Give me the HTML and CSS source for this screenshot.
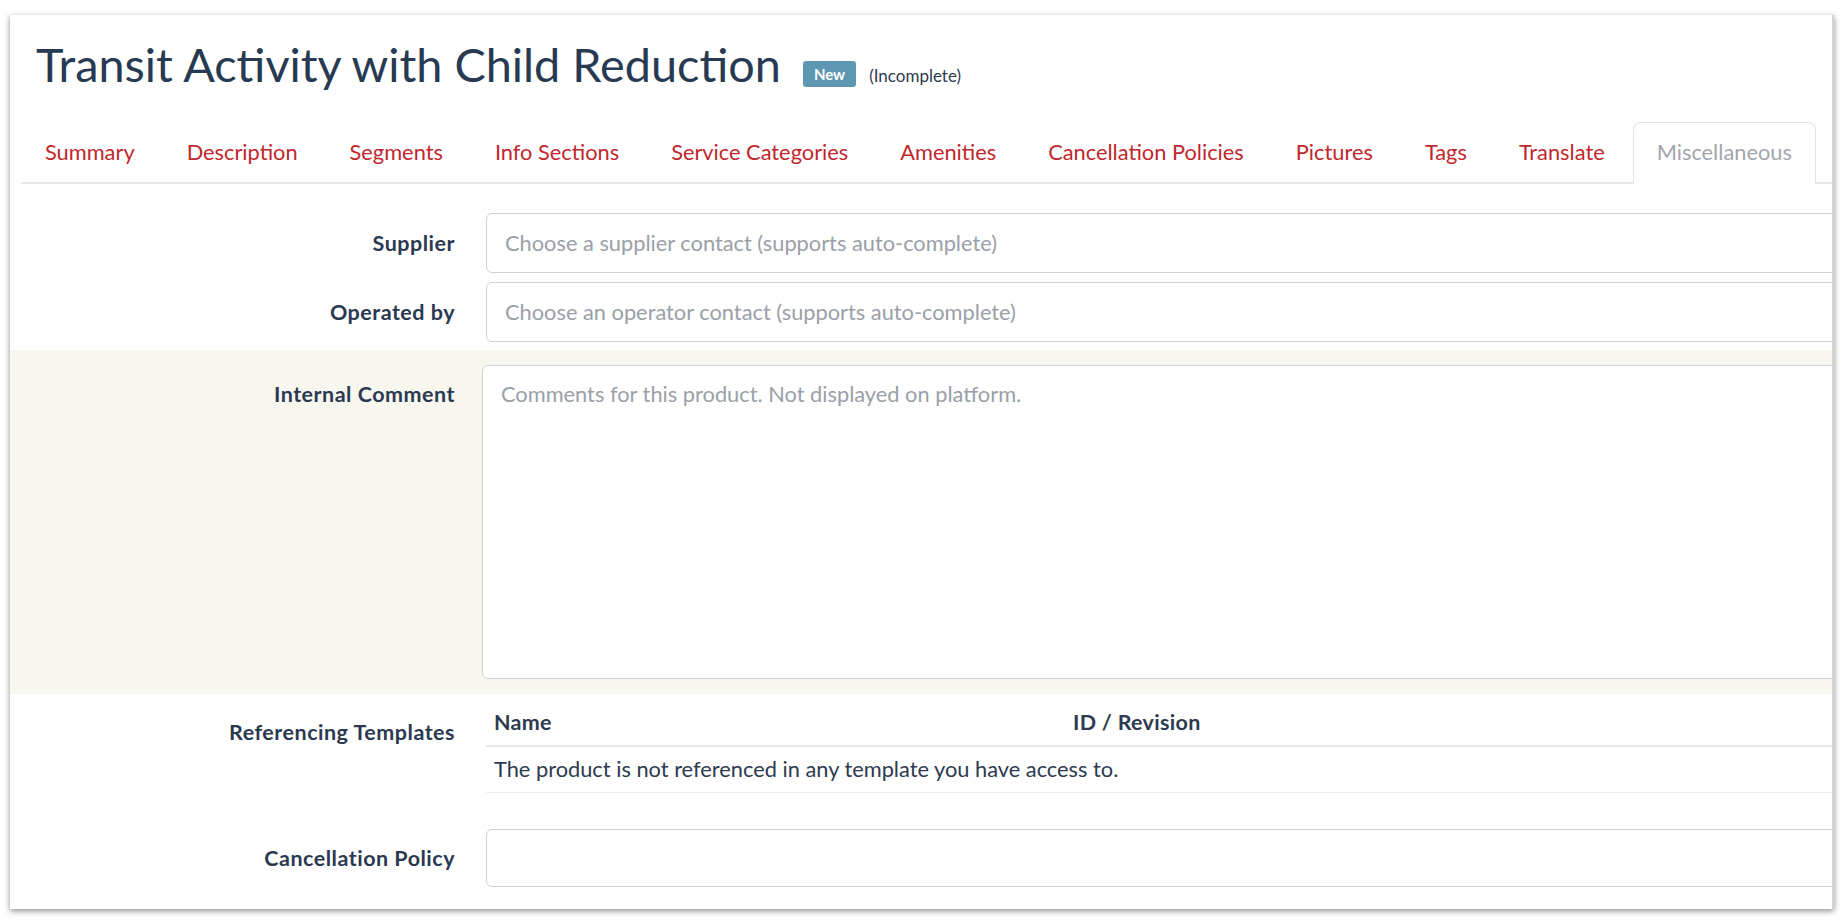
FILE: index.html
```html
<!DOCTYPE html>
<html>
<head>
<meta charset="utf-8">
<link rel="stylesheet" href="styles.css">
</head>
<body>
<div class="window">
  <div class="title-row">
    <h1 class="title">Transit Activity with Child Reduction</h1>
    <span class="badge">New</span>
    <span class="status">(Incomplete)</span>
  </div>
  <ul class="tabs">
    <li class="tab">Summary</li>
    <li class="tab">Description</li>
    <li class="tab">Segments</li>
    <li class="tab">Info Sections</li>
    <li class="tab">Service Categories</li>
    <li class="tab">Amenities</li>
    <li class="tab">Cancellation Policies</li>
    <li class="tab">Pictures</li>
    <li class="tab">Tags</li>
    <li class="tab">Translate</li>
    <li class="tab active">Miscellaneous</li>
  </ul>
  <div class="form">
    <div class="row row-supplier">
      <label class="label">Supplier</label>
      <div class="field"><div class="input placeholder">Choose a supplier contact (supports auto-complete)</div></div>
    </div>
    <div class="row row-operator">
      <label class="label">Operated by</label>
      <div class="field"><div class="input placeholder">Choose an operator contact (supports auto-complete)</div></div>
    </div>
    <div class="row row-comment">
      <label class="label">Internal Comment</label>
      <div class="field"><div class="textarea placeholder">Comments for this product. Not displayed on platform.</div></div>
    </div>
    <div class="row row-templates">
      <label class="label">Referencing Templates</label>
      <div class="field">
        <table class="table">
          <thead><tr><th class="col-name">Name</th><th class="col-id">ID / Revision</th></tr></thead>
          <tbody><tr><td colspan="2">The product is not referenced in any template you have access to.</td></tr></tbody>
        </table>
      </div>
    </div>
    <div class="row row-cancel">
      <label class="label">Cancellation Policy</label>
      <div class="field"><div class="input"></div></div>
    </div>
  </div>
</div>
</body>
</html>
```

FILE: styles.css
```css
html, body {
  margin: 0;
  padding: 0;
  background: #ffffff;
}
body {
  font-family: "Lato", "Noto Sans", sans-serif;
  color: #2d3a4f;
  width: 1844px;
  height: 920px;
  overflow: hidden;
}
.window {
  margin: 15px 10px 0 10px;
  height: 894px;
  background: #fff;
  border-right: 2px solid #d4d4d4;
  box-shadow: 0 2px 6px rgba(0,0,0,0.45);
  overflow: hidden;
  box-sizing: border-box;
}
.title-row {
  display: flex;
  align-items: baseline;
  padding: 20px 0 0 26px;
  height: 87px;
  box-sizing: border-box;
}
.title {
  margin: 0;
  font-size: 46.8px;
  font-weight: 400;
  line-height: 58px;
  color: #283a52;
  white-space: nowrap;
}
.badge {
  margin-left: 22px;
  background: #5d97b1;
  color: #fff;
  font-weight: 700;
  font-size: 15px;
  line-height: 26px;
  padding: 0 11px;
  border-radius: 3px;
  position: relative;
  top: -2px;
}
.status {
  margin-left: 13px;
  font-size: 17px;
  color: #2d3a4f;
}
.tabs {
  display: flex;
  list-style: none;
  margin: 20px 0 0 11px;
  padding: 0;
  border-bottom: 2px solid #e8e8e8;
  height: 60px;
}
.tab {
  padding: 16px 24px;
  margin-right: 4px;
  font-size: 21.8px;
  line-height: 28px;
  color: #c1272d;
  white-space: nowrap;
}
.tab.active {
  color: #a2a6ae;
  border: 1.5px solid #e4e4e4;
  border-bottom: 2px solid #fff;
  border-radius: 8px 8px 0 0;
  padding: 15px 23px 15px;
  height: 30px;
  background: #fff;
}
.form {
  padding-top: 29px;
}
.row {
  display: grid;
  grid-template-columns: 445px 1400px;
  column-gap: 31px;
}
.label {
  text-align: right;
  font-weight: 700;
  font-size: 21.5px;
  letter-spacing: 0.5px;
  color: #2b3950;
}
.input {
  height: 60px;
  box-sizing: border-box;
  border: 1.5px solid #d2d2d2;
  border-radius: 6px;
  padding: 0 18px;
  font-size: 21.8px;
  line-height: 57px;
  background: #fff;
}
.placeholder {
  color: #9aa0a8;
}
.row-supplier .label, .row-operator .label, .row-cancel .label {
  align-self: center;
}
.row-operator {
  margin-top: 9px;
}
.row-comment {
  margin-top: 8px;
  background: #f7f7f0;
  padding: 15px 0 15px;
}
.row-comment .label {
  padding-top: 16px;
  line-height: 26px;
}
.textarea {
  margin-left: -4px;
  height: 314px;
  box-sizing: border-box;
  border: 1.5px solid #d2d2d2;
  border-radius: 6px;
  padding: 15px 18px 13px;
  font-size: 21.8px;
  line-height: 26px;
  background: #fff;
}
.row-templates .label {
  padding-top: 25px;
  line-height: 26px;
}
.table {
  border-collapse: collapse;
  width: 1400px;
  font-size: 21.8px;
  color: #2d3a4f;
}
.table th {
  text-align: left;
  font-weight: 700;
  font-size: 21.5px;
  letter-spacing: 0.3px;
  padding: 18px 8px 13px;
  line-height: 20px;
  border-bottom: 2px solid #e6e6e6;
}
.table th.col-name {
  width: 563px;
}
.table td {
  padding: 13px 8px 14px;
  line-height: 18px;
  border-bottom: 1.5px solid #ededed;
}
.row-cancel {
  margin-top: 36px;
}
.row-cancel .input {
  height: 58px;
}
```
